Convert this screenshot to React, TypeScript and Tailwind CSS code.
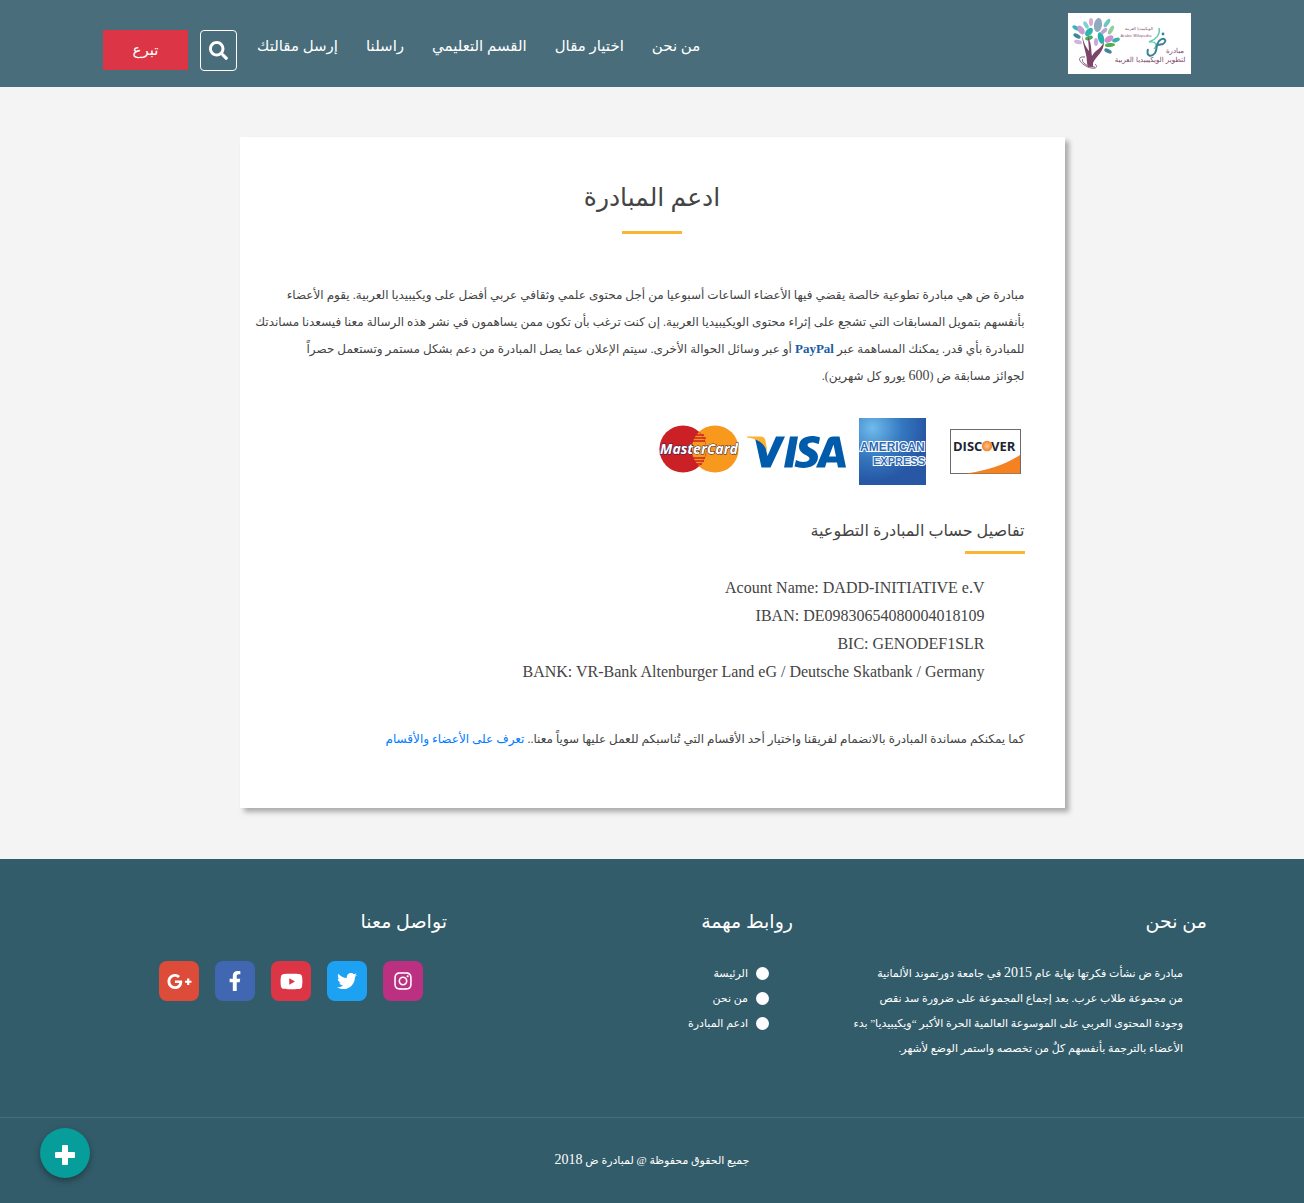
import React from "react";
import { FaFacebookF, FaSearch, FaTwitter, FaYoutube, FaInstagram, FaGooglePlusG } from "react-icons/fa";

const navItems = ["من نحن", "اختيار مقال", "القسم التعليمي", "راسلنا", "إرسل مقالتك"];

const footerLinks = ["الرئيسة", "من نحن", "ادعم المبادرة"];

const socials = [
  { name: "Instagram", Icon: FaInstagram, color: "bg-[#bc3081]", size: "size-5" },
  { name: "Twitter", Icon: FaTwitter, color: "bg-[#1da1f2]", size: "size-5" },
  { name: "YouTube", Icon: FaYoutube, color: "bg-[#dc3545]", size: "size-[23px]" },
  { name: "Facebook", Icon: FaFacebookF, color: "bg-[#4267b2]", size: "size-5" },
  { name: "Google Plus", Icon: FaGooglePlusG, color: "bg-[#dd4b39]", size: "size-[25px]" },
];

const leaves: [number, number, number, number, number, string][] = [
  [30, 12, 4, 7, 8, "#8fa9bd"],
  [23, 9, 2, 4, 0, "#d9a9cf"],
  [18, 12, 2, 4, -30, "#7fd0d0"],
  [39, 10, 2, 5, 35, "#6fc7c0"],
  [43, 17, 2, 5, 30, "#8fcf9a"],
  [8, 15, 2, 4, -60, "#35b7b5"],
  [13, 17, 3, 5, -35, "#c79cd0"],
  [21, 19, 3, 5, 40, "#2fb5b0"],
  [9, 23, 2, 4, -60, "#3c87a0"],
  [21, 25, 2, 4, 70, "#4fa860"],
  [10, 29, 2, 4, -75, "#d3b2e0"],
  [33, 25, 3, 6, -15, "#28b0ab"],
  [41, 26, 3, 5, 55, "#d08fd0"],
  [28, 29, 2, 4, 0, "#c9a6dd"],
  [48, 27, 2, 4, 70, "#3cb0ad"],
  [42, 32, 2, 5, 85, "#4caf50"],
  [40, 38, 2, 4, -65, "#3c87a0"],
  [36, 18, 2, 4, 50, "#bda3d4"],
];

function SiteLogo() {
  return (
    <svg viewBox="0 0 123 61" className="h-[61px] w-[123px] bg-white" role="img" aria-label="مبادرة ض">
      {leaves.map(([x, y, rx, ry, r, fill], i) => (
        <ellipse key={i} cx={x} cy={y} rx={rx} ry={ry} fill={fill} transform={`rotate(${r} ${x} ${y})`} />
      ))}
      <path d="M19 50C19 40 15 34 14 22C16 31 18 34 21 38L20 24C24 31 23 39 24 43C27 37 33 36 36 29C36 39 28 43 25 50L25 54H20Z" fill="#7b4468" />
      <path d="M17 44C8 43 11 50 20 54C27 57 31 54 27 51M15 46C12 49 20 54 27 54" fill="none" stroke="#8a5a7b" strokeWidth="1" />
      <path d="M91 15C93 23 86 27 81 29C88 28 90 32 86 36" fill="none" stroke="#62c9ad" strokeWidth="1.4" />
      <path d="M80 36C78 43 83 45 87 40C90 35 87 33 91 28C96 23 100 28 95 31L90 32" fill="none" stroke="#3a8199" strokeWidth="2" />
      <circle cx="95" cy="21" r="1.4" fill="#3a8199" />
      <g fill="#7b4468" fontFamily="'DejaVu Sans', sans-serif" textAnchor="middle">
        <text x="71" y="17" fontSize="4">الويكيبيديا العربية</text>
        <text x="68" y="24" fontSize="4" fontFamily="'Open Sans', sans-serif">Arabic Wikipedia</text>
        <text x="107" y="40" fontSize="7">مبادرة</text>
        <text x="82" y="49" fontSize="7">لتطوير الويكيبيديا العربية</text>
      </g>
    </svg>
  );
}

function MasterCardLogo() {
  return (
    <svg viewBox="0 0 80 48" className="h-12 w-20 [direction:ltr]" role="img" aria-label="MasterCard">
      <circle cx="56" cy="24" r="23.6" fill="#f8991d" />
      <circle cx="24" cy="24" r="23.6" fill="#cc2027" />
      <path d="M40 7A23.6 23.6 0 0 1 40 41A23.6 23.6 0 0 1 40 7Z" fill="#f8991d" />
      <path d="M36 10H45M34 13H47M33 16H46M33 33H46M34 36H45M36 39H43" stroke="#cc2027" strokeWidth="1.5" />
      <g fontFamily="'Open Sans', sans-serif" fontWeight="700" fontStyle="italic" fontSize="14" textAnchor="middle">
        <text x="40" y="29" fill="#fff" stroke="#1d2353" strokeWidth="1" paintOrder="stroke">MasterCard</text>
      </g>
    </svg>
  );
}

function VisaLogo() {
  return (
    <svg viewBox="0 0 100 34" className="h-[34px] w-[100px]" role="img" aria-label="Visa">
      <g fill="#005baa">
        <path d="M8 3C14 4 17 7 18 10L20.500 21L29 1.500H38L23.500 32.500H14.500Z" />
        <path d="M43 1.500H51L45.500 32.500H37Z" />
        <path d="M73 2.500L71.800 9C66 6.500 60.500 7 60.500 10C60.500 13.500 71 14 71 22C71 32 58 35 47.500 31.500L49 25C54 28 62.500 27.500 62.500 23.500C62.500 20 52 19.500 52 11.500C52 1.500 64-1 73 2.500Z" />
        <path fillRule="evenodd" d="M92.500 1.500H86Q82 1.500 80.500 5L69 32.500H78L79.500 27.500H90L91 32.500H99ZM86.500 9.500L89 21.500H82Z" />
      </g>
      <path d="M0 1.500H13Q18 1.500 18.500 6L20.500 17C17 8 11 4 0 2.500Z" fill="#fcb131" />
    </svg>
  );
}

function AmexLogo() {
  return (
    <svg viewBox="0 0 68 67" className="h-[67px] w-[68px] [direction:ltr]" role="img" aria-label="American Express">
      <defs>
        <radialGradient id="amex" cx="0.2" cy="0.15" r="0.8">
          <stop offset="0" stopColor="#6fbbeb" />
          <stop offset="0.55" stopColor="#3578c0" />
          <stop offset="1" stopColor="#2757a5" />
        </radialGradient>
      </defs>
      <rect width="67" height="67" fill="url(#amex)" />
      <g
        fontFamily="'Liberation Sans', sans-serif"
        fontWeight="700"
        fill="#2f6cb5"
        stroke="#fff"
        strokeWidth="2"
        paintOrder="stroke"
      >
        <text x="1" y="33" fontSize="12">AMERICAN</text>
        <text x="14" y="47" fontSize="11">EXPRESS</text>
      </g>
    </svg>
  );
}

function DiscoverLogo() {
  return (
    <svg viewBox="0 0 71 46" className="h-[46px] w-[71px] [direction:ltr]" role="img" aria-label="Discover">
      <defs>
        <radialGradient id="disc">
          <stop offset="0" stopColor="#fbc79b" />
          <stop offset="1" stopColor="#f48020" />
        </radialGradient>
      </defs>
      <rect x="0.500" y="0.500" width="70" height="44" fill="#fff" stroke="#6b6b6b" />
      <path d="M16 44.500C40 41 56 35 70 26V44.500Z" fill="#f58220" />
      <g fontFamily="'Open Sans', sans-serif" fontWeight="700" fontSize="13" fill="#1c2530">
        <text x="3" y="22">DISC</text>
        <text x="41" y="22">VER</text>
      </g>
      <circle cx="37" cy="17" r="5.200" fill="url(#disc)" />
    </svg>
  );
}

export default function App() {
  return (
    <div
      dir="rtl"
      lang="ar"
      className="flex min-h-screen flex-col bg-[#f4f4f4] font-['Liberation_Serif','DejaVu_Sans',serif] text-[#444]"
    >
      <header className="bg-[#496d7b]">
        <div className="mx-auto flex h-[87px] w-full max-w-[1140px] items-center justify-between ps-[31px] pe-[21px]">
          <a href="#home">
            <SiteLogo />
          </a>
          <nav className="flex items-center">
            <ul className="flex items-center gap-7 pe-5 pt-1 text-[15px] leading-8 text-white">
              {navItems.map((item) => (
                <li key={item}>
                  <a href="#nav" className="whitespace-nowrap">{item}</a>
                </li>
              ))}
            </ul>
            <div className="flex items-center gap-3 pt-[13px]">
              <button
                type="button"
                aria-label="بحث"
                className="flex h-[41px] w-[37px] items-center justify-center rounded-sm border border-white text-white"
              >
                <FaSearch className="size-[19px]" />
              </button>
              <a href="#donate" className="flex h-10 w-[85px] items-center justify-center bg-[#dc3545] text-[15px] text-white">
                تبرع
              </a>
            </div>
          </nav>
        </div>
      </header>

      <main className="flex-1 px-4 py-[50px]">
        <article className="mx-auto max-w-[825px] bg-white px-10 pt-7 pb-[55px] shadow-[4px_4px_5px_rgba(0,0,0,0.3)]">
          <h1 className="pt-1 pb-1 text-center text-[25px] leading-[58px]">ادعم المبادرة</h1>
          <div className="mx-auto h-[3px] w-[60px] bg-[#fbb534]" />

          <p className="mt-12 -me-9 text-xs leading-[27px]">
            مبادرة ض هي مبادرة تطوعية خالصة يقضي فيها الأعضاء الساعات أسبوعيا من أجل محتوى علمي وثقافي عربي أفضل على
            ويكيبيديا العربية. يقوم الأعضاء
            <br />
            بأنفسهم بتمويل المسابقات التي تشجع على إثراء محتوى الويكيبيديا العربية. إن كنت ترغب بأن تكون ممن يساهمون في
            نشر هذه الرسالة معنا فيسعدنا مساندتك
            <br />
            للمبادرة بأي قدر. يمكنك المساهمة عبر{" "}
            <a href="#paypal" className="text-[13px] leading-none font-bold text-[#1a5ba6]">PayPal</a> أو عبر وسائل الحوالة
            الأخرى. سيتم الإعلان عما يصل المبادرة من دعم بشكل مستمر وتستعمل حصراً
            <br />
            لجوائز مسابقة ض (<span className="text-sm leading-none">600</span> يورو كل شهرين).
          </p>

          <div className="mt-7 flex items-center gap-2 ps-1">
            <DiscoverLogo />
            <div className="ps-[15px] pe-1">
              <AmexLogo />
            </div>
            <VisaLogo />
            <div className="pb-1.5">
              <MasterCardLogo />
            </div>
          </div>

          <h2 className="mt-[26px] text-base leading-10">تفاصيل حساب المبادرة التطوعية</h2>
          <div className="h-[3px] w-[60px] bg-[#fbb534]" />

          <ul className="mt-5 ps-10 text-base leading-7">
            <li>Acount Name: DADD-INITIATIVE e.V</li>
            <li>IBAN: DE09830654080004018109</li>
            <li>BIC: GENODEF1SLR</li>
            <li>BANK: VR-Bank Altenburger Land eG / Deutsche Skatbank / Germany</li>
          </ul>

          <p className="mt-10 text-xs leading-[27px]">
            كما يمكنكم مساندة المبادرة بالانضمام لفريقنا واختيار أحد الأقسام التي تُناسبكم للعمل عليها سوياً معنا..{" "}
            <a href="#members" className="text-[#007bff]">تعرف على الأعضاء والأقسام</a>
          </p>
        </article>
      </main>

      <footer className="bg-[#325c6a] text-white">
        <div className="mx-auto grid max-w-[1140px] grid-cols-[414fr_346fr_380fr] pt-[38px] pb-14">
          <section className="px-[15px]">
            <h3 className="text-[19px] leading-[50px]">من نحن</h3>
            <p className="mt-3.5 ps-6 text-[11px] leading-[25px]">
              مبادرة ض نشأت فكرتها نهاية عام <span className="text-sm leading-none">2015</span> في جامعة دورتموند الألمانية
              <br />
              من مجموعة طلاب عرب. بعد إجماع المجموعة على ضرورة سد نقص
              <br />
              وجودة المحتوى العربي على الموسوعة العالمية الحرة الأكبر “ويكيبيديا” بدء
              <br />
              الأعضاء بالترجمة بأنفسهم كلٌ من تخصصه واستمر الوضع لأشهر.
            </p>
          </section>
          <section className="px-[15px]">
            <h3 className="text-[19px] leading-[50px]">روابط مهمة</h3>
            <ul className="mt-3.5 ps-6 text-[11px] leading-[25px]">
              {footerLinks.map((label) => (
                <li key={label}>
                  <a href="#link" className="flex items-center gap-2">
                    <span className="size-[13px] rounded-full bg-white" />
                    {label}
                  </a>
                </li>
              ))}
            </ul>
          </section>
          <section className="px-[15px]">
            <h3 className="text-[19px] leading-[50px]">تواصل معنا</h3>
            <div className="mt-3.5 flex gap-4 ps-6">
              {socials.map(({ name, Icon, color, size }) => (
                <a key={name} href="#social" aria-label={name} className={`flex size-10 items-center justify-center rounded-lg ${color}`}>
                  <Icon className={size} />
                </a>
              ))}
            </div>
          </section>
        </div>
        <p className="border-t border-[#496d7b] py-[30px] text-center text-[11px] leading-[25px]">
          جميع الحقوق محفوظة @ لمبادرة ض <span className="text-sm leading-none">2018</span>
        </p>
      </footer>

      <button
        type="button"
        aria-label="إضافة"
        className="fixed bottom-[25px] left-10 flex size-[50px] items-center justify-center rounded-full bg-[#069d9b] pt-1 text-white shadow-[0_3px_6px_rgba(0,0,0,0.35)]"
      >
        <svg viewBox="0 0 20 20" className="size-5" fill="currentColor" aria-hidden="true">
          <path d="M7 1Q7 0 8 0H12Q13 0 13 1V7H19Q20 7 20 8V12Q20 13 19 13H13V19Q13 20 12 20H8Q7 20 7 19V13H1Q0 13 0 12V8Q0 7 1 7H7Z" />
        </svg>
      </button>
    </div>
  );
}
